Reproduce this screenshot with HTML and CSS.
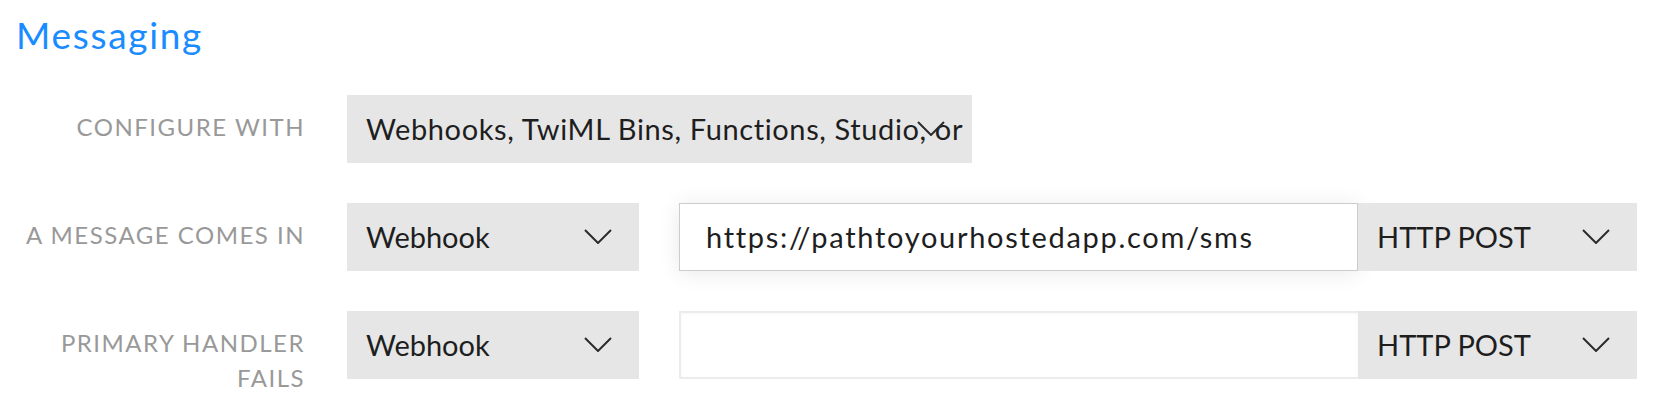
FILE: index.html
```html
<!DOCTYPE html>
<html lang="en">
<head>
<meta charset="utf-8">
<title>Messaging</title>
<link rel="stylesheet" href="styles.css">
</head>
<body>
<main class="page">
  <h2 class="title">Messaging</h2>
  <div class="rows">
    <div class="row">
      <div class="label">Configure with</div>
      <div class="select select-wide">
        <span class="select-text">Webhooks, TwiML Bins, Functions, Studio, or</span>
        <svg class="chev" width="28" height="15" viewBox="0 0 28 15"><polyline points="1,1 14,14 27,1" fill="none" stroke="#2b2b2b" stroke-width="2"/></svg>
      </div>
    </div>
    <div class="row">
      <div class="label">A message comes in</div>
      <div class="select select-type">
        <span class="select-text">Webhook</span>
        <svg class="chev" width="28" height="15" viewBox="0 0 28 15"><polyline points="1,1 14,14 27,1" fill="none" stroke="#2b2b2b" stroke-width="2"/></svg>
      </div>
      <div class="url-group">
        <div class="input input-focus">https://pathtoyourhostedapp.com/sms</div>
        <div class="select select-method">
          <span class="select-text">HTTP POST</span>
          <svg class="chev" width="28" height="15" viewBox="0 0 28 15"><polyline points="1,1 14,14 27,1" fill="none" stroke="#2b2b2b" stroke-width="2"/></svg>
        </div>
      </div>
    </div>
    <div class="row">
      <div class="label">Primary handler fails</div>
      <div class="select select-type">
        <span class="select-text">Webhook</span>
        <svg class="chev" width="28" height="15" viewBox="0 0 28 15"><polyline points="1,1 14,14 27,1" fill="none" stroke="#2b2b2b" stroke-width="2"/></svg>
      </div>
      <div class="url-group">
        <div class="input input-empty"></div>
        <div class="select select-method">
          <span class="select-text">HTTP POST</span>
          <svg class="chev" width="28" height="15" viewBox="0 0 28 15"><polyline points="1,1 14,14 27,1" fill="none" stroke="#2b2b2b" stroke-width="2"/></svg>
        </div>
      </div>
    </div>
  </div>
</main>
</body>
</html>
```

FILE: styles.css
```css
* { box-sizing: border-box; }

html, body {
  margin: 0;
  padding: 0;
  background: #ffffff;
}

body {
  font-family: "Lato", "Open Sans", "Liberation Sans", sans-serif;
  color: #222222;
}

.page {
  padding: 14px 0 0 16px;
}

.title {
  margin: 0;
  font-size: 37px;
  font-weight: 400;
  line-height: 42px;
  letter-spacing: 1.7px;
  color: #1a8cff;
}

.rows {
  display: flex;
  flex-direction: column;
  gap: 40px;
  margin-top: 39px;
}

.row {
  display: flex;
  align-items: flex-start;
}

.label {
  width: 289px;
  margin-right: 42px;
  padding-top: 14px;
  text-align: right;
  text-transform: uppercase;
  font-size: 24px;
  line-height: 35px;
  letter-spacing: 1.5px;
  color: #999999;
}

.select {
  position: relative;
  height: 68px;
  background: #e6e6e6;
  padding: 0 10px 0 19px;
  font-size: 29px;
  line-height: 68px;
  color: #1e1e1e;
  overflow: hidden;
  white-space: nowrap;
}

.select-text {
  display: block;
}

.chev {
  position: absolute;
  right: 27px;
  top: 26px;
}

.select-wide { width: 625px; padding-right: 0; }
.select-wide .select-text { letter-spacing: 0.62px; }
.select-type { width: 292px; margin-right: 40px; }
.select-method { width: 279px; }

.url-group {
  display: flex;
}

.input {
  width: 679px;
  height: 68px;
  background: #ffffff;
  padding: 0 0 0 26px;
  font-size: 29px;
  line-height: 66px;
  color: #1e1e1e;
  letter-spacing: 1.7px;
}

.input-focus {
  border: 1.5px solid #cccccc;
  box-shadow: 0 2px 22px rgba(0, 0, 0, 0.09);
}

.input-empty {
  border: 2px solid #ececec;
  border-right: none;
  box-shadow: inset 0 1px 3px rgba(0, 0, 0, 0.04);
}
```
